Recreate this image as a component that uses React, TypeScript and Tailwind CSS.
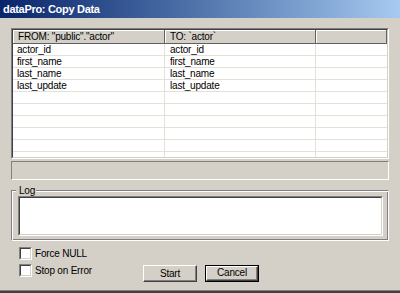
import React from "react";

const rows: [string, string][] = [
  ["actor_id", "actor_id"],
  ["first_name", "first_name"],
  ["last_name", "last_name"],
  ["last_update", "last_update"],
  ["", ""],
  ["", ""],
  ["", ""],
  ["", ""],
  ["", ""],
  ["", ""],
];

function Checkbox({ label }: { label: string }) {
  return (
    <div className="flex items-center h-[13px]">
      <div className="w-[13px] h-[13px] border border-t-[#808080] border-l-[#808080] border-b-white border-r-white">
        <div className="w-full h-full bg-white border border-t-[#404040] border-l-[#404040] border-b-[#d4d0c8] border-r-[#d4d0c8]" />
      </div>
      <span className="ml-[3px] text-black leading-[13px]">{label}</span>
    </div>
  );
}

export default function App() {
  return (
    <div className="w-[400px] h-[293px] bg-[#d4d0c8] flex flex-col overflow-hidden border-b-2 border-[#404040] text-[10px] tracking-[-0.2px] text-black font-['Liberation_Sans',Arial,sans-serif]">
      <div className="h-[18px] shrink-0 flex items-center pl-[3px] pt-[1px] text-white font-bold text-[11px] tracking-[-0.3px] bg-linear-to-r from-[#0a246a] to-[#a6caf0]">
        dataPro: Copy Data
      </div>
      <div className="flex-1 flex flex-col px-[11px] pt-[10px] border-b border-[#808080]">
        {/* table */}
        <div className="h-[131px] border border-t-[#808080] border-l-[#808080] border-b-white border-r-white">
          <div className="h-full flex flex-col bg-white overflow-hidden border border-t-[#404040] border-l-[#404040] border-b-[#d4d0c8] border-r-[#d4d0c8]">
            <div className="flex h-[14px] shrink-0">
              <div className="w-[152px] bg-[#d4d0c8] border-b border-r border-[#606060] shadow-[inset_1px_1px_0_#fff] pl-[5px] leading-[13px]">
                FROM: "public"."actor"
              </div>
              <div className="w-[151px] bg-[#d4d0c8] border-b border-r border-[#606060] shadow-[inset_1px_1px_0_#fff] pl-[5px] leading-[13px]">
                TO: `actor`
              </div>
              <div className="flex-1 bg-[#d4d0c8] border-b border-r border-[#606060] shadow-[inset_1px_1px_0_#fff]" />
            </div>
            {rows.map((r, i) => (
              <div key={i} className="flex h-[12px] shrink-0 border-b border-[#e3e0d8]">
                <div className="w-[152px] border-r border-[#e3e0d8] pl-[4px] leading-[11px]">{r[0]}</div>
                <div className="w-[151px] border-r border-[#e3e0d8] pl-[5px] leading-[11px]">{r[1]}</div>
                <div className="flex-1" />
              </div>
            ))}
          </div>
        </div>
        {/* status panel */}
        <div className="mt-[2px] h-[19px] border border-t-[#808080] border-l-[#808080] border-b-white border-r-white" />
        {/* log group */}
        <fieldset className="mt-[5px] border border-t-[#808080] border-l-[#808080] border-b-white border-r-white shadow-[inset_1px_1px_0_#fff,inset_-1px_-1px_0_#808080] pl-[6px] pr-[5px] pb-[4px]">
          <legend className="-ml-[2px] pl-[3px] pr-[1px] leading-[11px] bg-[#d4d0c8]">Log</legend>
          <div className="h-[40px] border border-t-[#808080] border-l-[#808080] border-b-white border-r-white">
            <div className="h-full bg-white border border-t-[#404040] border-l-[#404040] border-b-[#d4d0c8] border-r-[#d4d0c8]" />
          </div>
        </fieldset>
        {/* bottom controls */}
        <div className="flex items-start pt-[6px]">
          <div className="w-[132px] pl-[8px] flex flex-col gap-[4px]">
            <Checkbox label="Force NULL" />
            <Checkbox label="Stop on Error" />
          </div>
          <div className="flex gap-[8px] mt-[18px]">
            <button className="w-[54px] h-[17px] bg-[#d4d0c8] border border-t-white border-l-white border-b-[#404040] border-r-[#404040] shadow-[inset_-1px_-1px_0_#808080] leading-[14px] text-center">
              Start
            </button>
            <button className="w-[54px] h-[17px] bg-[#d4d0c8] border border-black">
              <div className="w-full h-full border border-t-white border-l-white border-b-[#404040] border-r-[#404040] shadow-[inset_-1px_-1px_0_#808080] leading-[12px] text-center">
                Cancel
              </div>
            </button>
          </div>
        </div>
      </div>
    </div>
  );
}
